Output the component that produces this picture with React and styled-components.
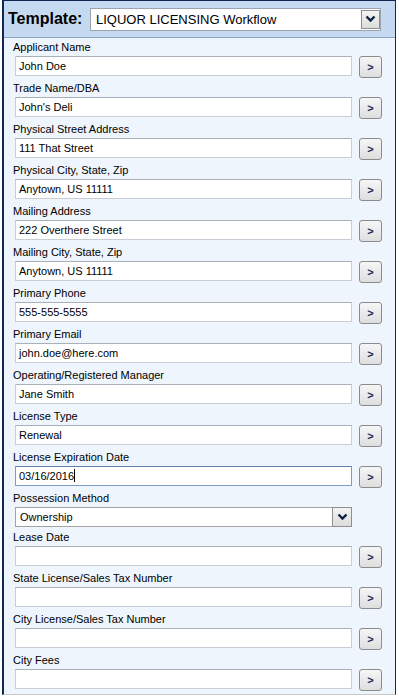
import React from 'react';
import styled, { createGlobalStyle } from 'styled-components';

const Global = createGlobalStyle`
body {
    margin: 0;
    background: #ffffff;
    font-family: "Liberation Sans", Arial, sans-serif;
}
`;

const Panel = styled.div`
width: 391px;
margin-left: 2px;
border: 1px solid #0f2858;
border-left-width: 2px;
border-bottom: 1px solid #c8c8c8;
background-color: #eef5fd;
`;

const Header = styled.div`
display: flex;
align-items: center;
height: 36px;
padding-left: 4px;
background-color: #c5d9f1;
border-bottom: 1px solid #8ea4c4;
`;

const HeaderLabel = styled.span`
font-size: 16px;
font-weight: bold;
color: #000;
width: 82px;
`;

const HeaderSelect = styled.div`
display: flex;
align-items: center;
justify-content: space-between;
width: 291px;
height: 23px;
box-sizing: border-box;
border: 1px solid #9aa3ae;
background: #fff;
padding: 0 1px 0 5px;
font-size: 13px;
`;

const Body = styled.div`
padding: 2px 0 0 9px;
`;

const Field = styled.div`
margin-bottom: 3px;
`;

const Label = styled.div`
font-size: 11px;
line-height: 14px;
color: #000;
`;

const Row = styled.div`
display: flex;
align-items: flex-start;
margin-top: 2px;
padding-left: 2px;
`;

const Input = styled.div`
width: 337px;
height: 20px;
box-sizing: border-box;
border: 1px solid ${p => (p.$focus ? '#7f9bc8' : '#c9ced6')};
border-top-color: ${p => (p.$focus ? '#5f7fb3' : '#aab0b8')};
background: #fff;
font-size: 11px;
line-height: 18px;
padding-left: 3px;
color: #000;
`;

const Caret = styled.span`
display: inline-block;
width: 1px;
height: 13px;
background: #000;
vertical-align: -2px;
`;

const GoButton = styled.div`
width: 23px;
height: 22px;
margin-left: 7px;
box-sizing: border-box;
border: 1px solid #8b8b8b;
border-radius: 3px;
background: linear-gradient(#f6f6f6, #dedede);
display: flex;
align-items: center;
justify-content: center;
font-size: 11px;
font-weight: bold;
color: #1a2a55;
`;

const Select = styled.div`
display: flex;
align-items: center;
justify-content: space-between;
width: 337px;
height: 20px;
box-sizing: border-box;
border: 1px solid #a3a3a3;
background: #fff;
font-size: 11px;
padding-left: 4px;
`;

const DropButton = styled.div`
width: ${p => p.$w}px;
height: ${p => p.$h}px;
box-sizing: border-box;
border: 1px solid #8f8f8f;
background: linear-gradient(#f4f4f4, #dcdcdc);
display: flex;
align-items: center;
justify-content: center;
margin-right: -1px;
`;

const Chevron = () => (
    <svg width="11" height="8" viewBox="0 0 11 8">
        <polyline points="1.5,1.5 5.5,5.5 9.5,1.5" fill="none" stroke="#0d1f45" strokeWidth="2.4" />
    </svg>
);

const fields = [
    ['Applicant Name', 'John Doe'],
    ['Trade Name/DBA', "John's Deli"],
    ['Physical Street Address', '111 That Street'],
    ['Physical City, State, Zip', 'Anytown, US 11111'],
    ['Mailing Address', '222 Overthere Street'],
    ['Mailing City, State, Zip', 'Anytown, US 11111'],
    ['Primary Phone', '555-555-5555'],
    ['Primary Email', 'john.doe@here.com'],
    ['Operating/Registered Manager', 'Jane Smith'],
    ['License Type', 'Renewal'],
    ['License Expiration Date', '03/16/2016', 'focus'],
    ['Possession Method', 'Ownership', 'select'],
    ['Lease Date', ''],
    ['State License/Sales Tax Number', ''],
    ['City License/Sales Tax Number', ''],
    ['City Fees', ''],
];

export default function App() {
    return (
        <>
            <Global />
            <Panel>
                <Header>
                    <HeaderLabel>Template:</HeaderLabel>
                    <HeaderSelect>
                        LIQUOR LICENSING Workflow
                        <DropButton $w={19} $h={19}><Chevron /></DropButton>
                    </HeaderSelect>
                </Header>
                <Body>
                    {fields.map(([label, value, kind]) => (
                        <Field key={label}>
                            <Label>{label}</Label>
                            <Row>
                                {kind === 'select' ? (
                                    <Select>
                                        {value}
                                        <DropButton $w={20} $h={20}><Chevron /></DropButton>
                                    </Select>
                                ) : (
                                    <>
                                        <Input $focus={kind === 'focus'}>
                                            {value}
                                            {kind === 'focus' && <Caret />}
                                        </Input>
                                        <GoButton>&gt;</GoButton>
                                    </>
                                )}
                            </Row>
                        </Field>
                    ))}
                </Body>
            </Panel>
        </>
    );
}
